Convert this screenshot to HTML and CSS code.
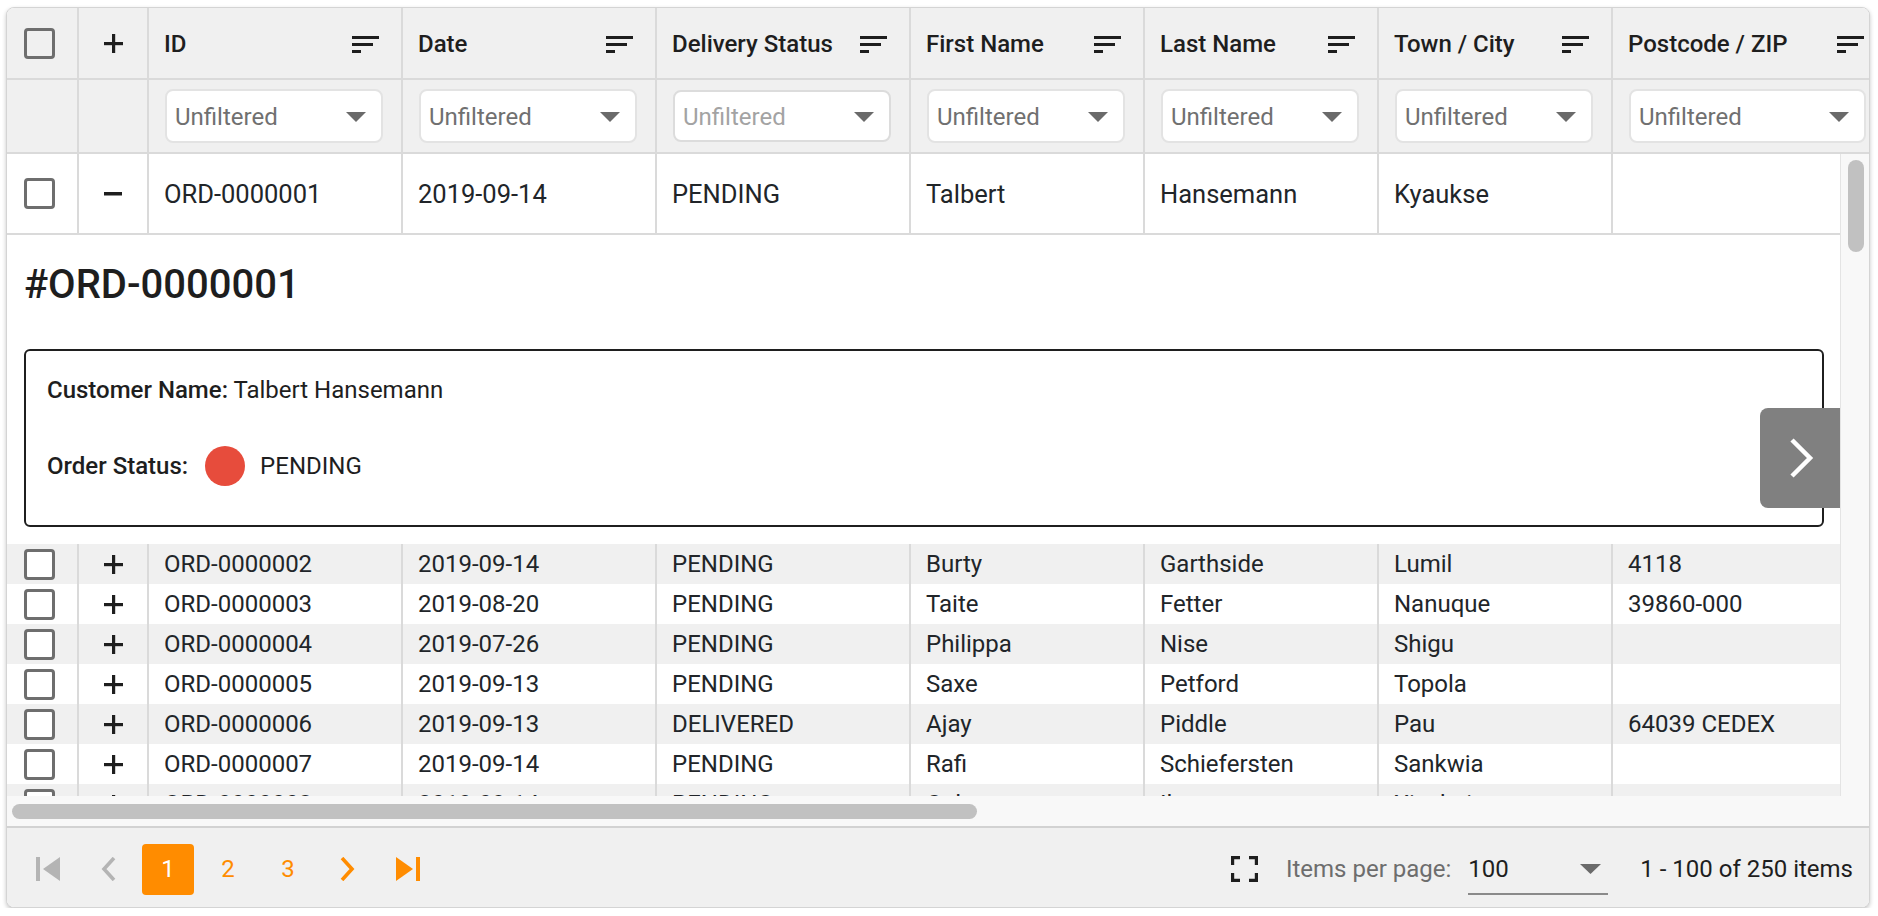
FILE: index.html
```html
<!DOCTYPE html>
<html>
<head>
<meta charset="utf-8">
<title>Orders Grid</title>
<link rel="stylesheet" href="styles.css">
</head>
<body>
<div class="grid">
  <div class="grid-header">
    <div class="row head-row">
      <div class="cell c-check"><span class="checkbox"></span></div>
      <div class="cell c-exp"><svg class="ico-plus" width="19" height="19" viewBox="0 0 19 19"><rect x="8" y="0" width="3.2" height="19"/><rect x="0" y="8" width="19" height="3.2"/></svg></div>
      <div class="cell th"><span>ID</span><svg class="sort" width="27" height="17" viewBox="0 0 27 17"><rect x="0" y="0" width="27" height="3"/><rect x="0" y="7" width="21" height="3"/><rect x="0" y="14" width="9" height="3"/></svg></div>
      <div class="cell th"><span>Date</span><svg class="sort" width="27" height="17" viewBox="0 0 27 17"><rect x="0" y="0" width="27" height="3"/><rect x="0" y="7" width="21" height="3"/><rect x="0" y="14" width="9" height="3"/></svg></div>
      <div class="cell th"><span>Delivery Status</span><svg class="sort" width="27" height="17" viewBox="0 0 27 17"><rect x="0" y="0" width="27" height="3"/><rect x="0" y="7" width="21" height="3"/><rect x="0" y="14" width="9" height="3"/></svg></div>
      <div class="cell th"><span>First Name</span><svg class="sort" width="27" height="17" viewBox="0 0 27 17"><rect x="0" y="0" width="27" height="3"/><rect x="0" y="7" width="21" height="3"/><rect x="0" y="14" width="9" height="3"/></svg></div>
      <div class="cell th"><span>Last Name</span><svg class="sort" width="27" height="17" viewBox="0 0 27 17"><rect x="0" y="0" width="27" height="3"/><rect x="0" y="7" width="21" height="3"/><rect x="0" y="14" width="9" height="3"/></svg></div>
      <div class="cell th"><span>Town / City</span><svg class="sort" width="27" height="17" viewBox="0 0 27 17"><rect x="0" y="0" width="27" height="3"/><rect x="0" y="7" width="21" height="3"/><rect x="0" y="14" width="9" height="3"/></svg></div>
      <div class="cell th last"><span>Postcode / ZIP</span><svg class="sort" width="27" height="17" viewBox="0 0 27 17"><rect x="0" y="0" width="27" height="3"/><rect x="0" y="7" width="21" height="3"/><rect x="0" y="14" width="9" height="3"/></svg></div>
    </div>
    <div class="row filter-row">
      <div class="cell c-check"></div>
      <div class="cell c-exp"></div>
      <div class="cell fc"><div class="filter"><span>Unfiltered</span><svg class="caret" width="20" height="10" viewBox="0 0 20 10"><polygon points="0,0 20,0 10,10"/></svg></div></div>
      <div class="cell fc"><div class="filter"><span>Unfiltered</span><svg class="caret" width="20" height="10" viewBox="0 0 20 10"><polygon points="0,0 20,0 10,10"/></svg></div></div>
      <div class="cell fc"><div class="filter light"><span>Unfiltered</span><svg class="caret" width="20" height="10" viewBox="0 0 20 10"><polygon points="0,0 20,0 10,10"/></svg></div></div>
      <div class="cell fc"><div class="filter"><span>Unfiltered</span><svg class="caret" width="20" height="10" viewBox="0 0 20 10"><polygon points="0,0 20,0 10,10"/></svg></div></div>
      <div class="cell fc"><div class="filter"><span>Unfiltered</span><svg class="caret" width="20" height="10" viewBox="0 0 20 10"><polygon points="0,0 20,0 10,10"/></svg></div></div>
      <div class="cell fc"><div class="filter"><span>Unfiltered</span><svg class="caret" width="20" height="10" viewBox="0 0 20 10"><polygon points="0,0 20,0 10,10"/></svg></div></div>
      <div class="cell fc last"><div class="filter"><span>Unfiltered</span><svg class="caret" width="20" height="10" viewBox="0 0 20 10"><polygon points="0,0 20,0 10,10"/></svg></div></div>
    </div>
  </div>

  <div class="grid-body">
    <div class="body-scroll">
      <div class="row master">
        <div class="cell c-check"><span class="checkbox"></span></div>
        <div class="cell c-exp"><svg class="ico-plus" width="18" height="4" viewBox="0 0 18 4"><rect x="0" y="0" width="18" height="3.5"/></svg></div>
        <div class="cell">ORD-0000001</div>
        <div class="cell">2019-09-14</div>
        <div class="cell">PENDING</div>
        <div class="cell">Talbert</div>
        <div class="cell">Hansemann</div>
        <div class="cell">Kyaukse</div>
        <div class="cell"></div>
      </div>

      <div class="detail">
        <h2 class="detail-title">#ORD-0000001</h2>
        <div class="card">
          <div class="card-line"><b>Customer Name:</b> Talbert Hansemann</div>
          <div class="card-status"><b>Order Status:</b><span class="dot"></span><span>PENDING</span></div>
        </div>
        <button class="detail-next" type="button"><svg width="24" height="40" viewBox="0 0 24 40"><polyline points="2,2 20,20 2,38" fill="none" stroke="#fff" stroke-width="4.5"/></svg></button>
      </div>

      <div class="row data alt">
        <div class="cell c-check"><span class="checkbox"></span></div>
        <div class="cell c-exp"><svg class="ico-plus" width="19" height="19" viewBox="0 0 19 19"><rect x="8" y="0" width="3.2" height="19"/><rect x="0" y="8" width="19" height="3.2"/></svg></div>
        <div class="cell">ORD-0000002</div><div class="cell">2019-09-14</div><div class="cell">PENDING</div><div class="cell">Burty</div><div class="cell">Garthside</div><div class="cell">Lumil</div><div class="cell">4118</div>
      </div>
      <div class="row data">
        <div class="cell c-check"><span class="checkbox"></span></div>
        <div class="cell c-exp"><svg class="ico-plus" width="19" height="19" viewBox="0 0 19 19"><rect x="8" y="0" width="3.2" height="19"/><rect x="0" y="8" width="19" height="3.2"/></svg></div>
        <div class="cell">ORD-0000003</div><div class="cell">2019-08-20</div><div class="cell">PENDING</div><div class="cell">Taite</div><div class="cell">Fetter</div><div class="cell">Nanuque</div><div class="cell">39860-000</div>
      </div>
      <div class="row data alt">
        <div class="cell c-check"><span class="checkbox"></span></div>
        <div class="cell c-exp"><svg class="ico-plus" width="19" height="19" viewBox="0 0 19 19"><rect x="8" y="0" width="3.2" height="19"/><rect x="0" y="8" width="19" height="3.2"/></svg></div>
        <div class="cell">ORD-0000004</div><div class="cell">2019-07-26</div><div class="cell">PENDING</div><div class="cell">Philippa</div><div class="cell">Nise</div><div class="cell">Shigu</div><div class="cell"></div>
      </div>
      <div class="row data">
        <div class="cell c-check"><span class="checkbox"></span></div>
        <div class="cell c-exp"><svg class="ico-plus" width="19" height="19" viewBox="0 0 19 19"><rect x="8" y="0" width="3.2" height="19"/><rect x="0" y="8" width="19" height="3.2"/></svg></div>
        <div class="cell">ORD-0000005</div><div class="cell">2019-09-13</div><div class="cell">PENDING</div><div class="cell">Saxe</div><div class="cell">Petford</div><div class="cell">Topola</div><div class="cell"></div>
      </div>
      <div class="row data alt">
        <div class="cell c-check"><span class="checkbox"></span></div>
        <div class="cell c-exp"><svg class="ico-plus" width="19" height="19" viewBox="0 0 19 19"><rect x="8" y="0" width="3.2" height="19"/><rect x="0" y="8" width="19" height="3.2"/></svg></div>
        <div class="cell">ORD-0000006</div><div class="cell">2019-09-13</div><div class="cell">DELIVERED</div><div class="cell">Ajay</div><div class="cell">Piddle</div><div class="cell">Pau</div><div class="cell">64039 CEDEX</div>
      </div>
      <div class="row data">
        <div class="cell c-check"><span class="checkbox"></span></div>
        <div class="cell c-exp"><svg class="ico-plus" width="19" height="19" viewBox="0 0 19 19"><rect x="8" y="0" width="3.2" height="19"/><rect x="0" y="8" width="19" height="3.2"/></svg></div>
        <div class="cell">ORD-0000007</div><div class="cell">2019-09-14</div><div class="cell">PENDING</div><div class="cell">Rafi</div><div class="cell">Schiefersten</div><div class="cell">Sankwia</div><div class="cell"></div>
      </div>
      <div class="row data alt">
        <div class="cell c-check"><span class="checkbox"></span></div>
        <div class="cell c-exp"><svg class="ico-plus" width="19" height="19" viewBox="0 0 19 19"><rect x="8" y="0" width="3.2" height="19"/><rect x="0" y="8" width="19" height="3.2"/></svg></div>
        <div class="cell">ORD-0000008</div><div class="cell">2019-09-14</div><div class="cell">PENDING</div><div class="cell">Colene</div><div class="cell">Ilyasov</div><div class="cell">Xinzhai</div><div class="cell"></div>
      </div>
    </div>
    <div class="vscroll"><div class="vthumb"></div></div>
  </div>

  <div class="hscroll"><div class="hthumb"></div></div>

  <div class="pager">
    <div class="pages">
      <span class="pbtn dis"><svg width="24" height="24" viewBox="0 0 24 24"><rect x="0" y="0" width="4" height="24"/><polygon points="7,12 24,0 24,24"/></svg></span>
      <span class="pbtn dis"><svg width="18" height="24" viewBox="0 0 18 24"><polyline points="15,1 5,12 15,23" fill="none" stroke="currentColor" stroke-width="3.6"/></svg></span>
      <span class="pbtn cur">1</span>
      <span class="pbtn">2</span>
      <span class="pbtn">3</span>
      <span class="pbtn"><svg width="18" height="24" viewBox="0 0 18 24"><polyline points="3,1 13,12 3,23" fill="none" stroke="currentColor" stroke-width="3.6"/></svg></span>
      <span class="pbtn"><svg width="24" height="24" viewBox="0 0 24 24"><polygon points="0,0 17,12 0,24"/><rect x="20" y="0" width="4" height="24"/></svg></span>
    </div>
    <div class="pinfo">
      <svg class="fs" width="27" height="26" viewBox="0 0 27 26"><path d="M1.6 9 V1.6 H9 M18 1.6 H25.4 V9 M25.4 17 V24.4 H18 M9 24.4 H1.6 V17" fill="none" stroke="#1e1e1e" stroke-width="3.2"/></svg>
      <span class="ipp">Items per page:</span>
      <span class="psel"><span>100</span><svg width="21" height="10" viewBox="0 0 21 10"><polygon points="0,0 21,0 10.5,10"/></svg></span>
      <span class="count">1 - 100 of 250 items</span>
    </div>
  </div>
</div>
</body>
</html>
```

FILE: styles.css
```css
* { box-sizing: border-box; }
html, body { margin: 0; padding: 0; background: #fff; }
body {
  font-family: Roboto, "Noto Sans", "Liberation Sans", sans-serif;
  font-size: 24px;
  color: #212529;
}

.grid {
  margin: 7px 0 0 6px;
  width: 1864px;
  height: 901px;
  border: 1px solid #d4d4d4;
  border-radius: 8px;
  box-shadow: 0 2px 4px rgba(0, 0, 0, 0.22);
  overflow: hidden;
  display: flex;
  flex-direction: column;
  background: #fff;
}

/* rows & cells */
.row {
  display: grid;
  grid-template-columns: 70px 70px 254px 254px 254px 234px 234px 234px 258px;
  width: max-content;
}
.head-row, .filter-row { grid-template-columns: 70px 70px 254px 254px 254px 234px 234px 234px 258px; }
.cell {
  border-left: 2px solid #dadada;
  display: flex;
  align-items: center;
  padding: 0 22px 0 15px;
  white-space: nowrap;
  overflow: hidden;
}
.cell:first-child { border-left: none; }
.c-check { padding: 0 0 0 17px; }
.c-exp { padding: 0; justify-content: center; }

.checkbox {
  display: block;
  width: 31px;
  height: 31px;
  border: 3px solid #6e6e6e;
  border-radius: 4px;
  background: #fff;
}
.ico-plus { fill: #1e1e1e; display: block; }

/* header */
.grid-header { background: #f0f0f0; overflow: hidden; flex: none; }
.head-row { height: 72px; border-bottom: 2px solid #dadada; }
.head-row .checkbox { background: transparent; }
.th { justify-content: space-between; font-weight: 500; color: #1e1e1e; padding-top: 2px; }
.th.last { padding-right: 5px; }
.sort { fill: #1e1e1e; flex: none; display: block; }

.filter-row { height: 74px; border-bottom: 2px solid #dadada; }
.fc { padding: 0 18px 0 16px; }
.fc.last { padding-right: 3px; }
.filter {
  flex: 1;
  height: 54px;
  background: #fff;
  border: 2px solid #e3e3e3;
  border-radius: 8px;
  display: flex;
  align-items: center;
  justify-content: space-between;
  padding: 2px 15px 0 8px;
  color: #707070;
}
.filter.light { color: #a3a3a3; height: 52px; border-color: #dcdcdc; }
.caret { fill: #6a6a6a; display: block; }

/* body */
.grid-body { position: relative; display: flex; height: 642px; flex: none; }
.body-scroll { width: 1833px; overflow: hidden; flex: none; }
.vscroll {
  flex: 1;
  background: #f8f8f8;
  border-left: 1px solid #e4e4e4;
}
.vthumb {
  margin: 6px 0 0 7px;
  width: 16px;
  height: 92px;
  background: #c1c1c1;
  border-radius: 8px;
}

.master { height: 81px; border-bottom: 2px solid #dadada; font-size: 25.5px; background: #fff; }
.data { height: 40px; background: #fff; }
.data.alt { background: #f0f0f0; }

.detail {
  position: relative;
  height: 309px;
  padding: 26px 16px 0 17px;
  background: #fff;
}
.detail-title {
  margin: 0;
  font-size: 40px;
  line-height: 48px;
  font-weight: 500;
  color: #1e1e1e;
}
.card {
  margin-top: 40px;
  height: 178px;
  border: 2px solid #1f1f1f;
  border-radius: 6px;
  padding: 25px 20px 0 21px;
  line-height: 28px;
  color: #1e1e1e;
}
.card b { font-weight: 500; }
.card-status {
  margin-top: 42px;
  height: 40px;
  display: flex;
  align-items: center;
}
.dot {
  width: 40px;
  height: 40px;
  border-radius: 50%;
  background: #e74c3c;
  margin: 0 15px 0 17px;
}
.detail-next {
  position: absolute;
  right: 0;
  top: 173px;
  width: 80px;
  height: 100px;
  border: none;
  padding: 0;
  background: #808080;
  border-radius: 8px 0 0 8px;
  display: flex;
  align-items: center;
  justify-content: center;
}
.detail-next svg { display: block; margin-left: 4px; }

/* horizontal scrollbar */
.hscroll {
  height: 30px;
  flex: none;
  background: #f8f8f8;
  padding: 8px 0 0 5px;
}
.hthumb {
  width: 965px;
  height: 15px;
  background: #c1c1c1;
  border-radius: 8px;
}

/* pager */
.pager {
  flex: 1;
  background: #f0f0f0;
  border-top: 2px solid #d2d2d2;
  display: flex;
  align-items: center;
  justify-content: space-between;
  padding: 3px 16px 0 15px;
}
.pages { display: flex; align-items: center; gap: 8px; }
.pbtn {
  width: 52px;
  height: 51px;
  display: flex;
  align-items: center;
  justify-content: center;
  color: #ff8c00;
  fill: #ff8c00;
  border-radius: 4px;
}
.pbtn svg { display: block; }
.pbtn.dis { color: #b4b4b4; fill: #b4b4b4; }
.pbtn.cur { background: #ff8c00; color: #fff; }

.pinfo { display: flex; align-items: center; }
.fs { display: block; margin-right: 28px; }
.ipp { color: #6d6d6d; margin-right: 17px; }
.psel {
  width: 140px;
  height: 50px;
  border-bottom: 2px solid #8a8a8a;
  display: flex;
  align-items: center;
  justify-content: space-between;
  padding: 0 7px 0 0;
  margin-right: 32px;
  margin-top: 2px;
  color: #1e1e1e;
}
.psel svg { fill: #6a6a6a; display: block; }
.count { color: #1e1e1e; }
```
